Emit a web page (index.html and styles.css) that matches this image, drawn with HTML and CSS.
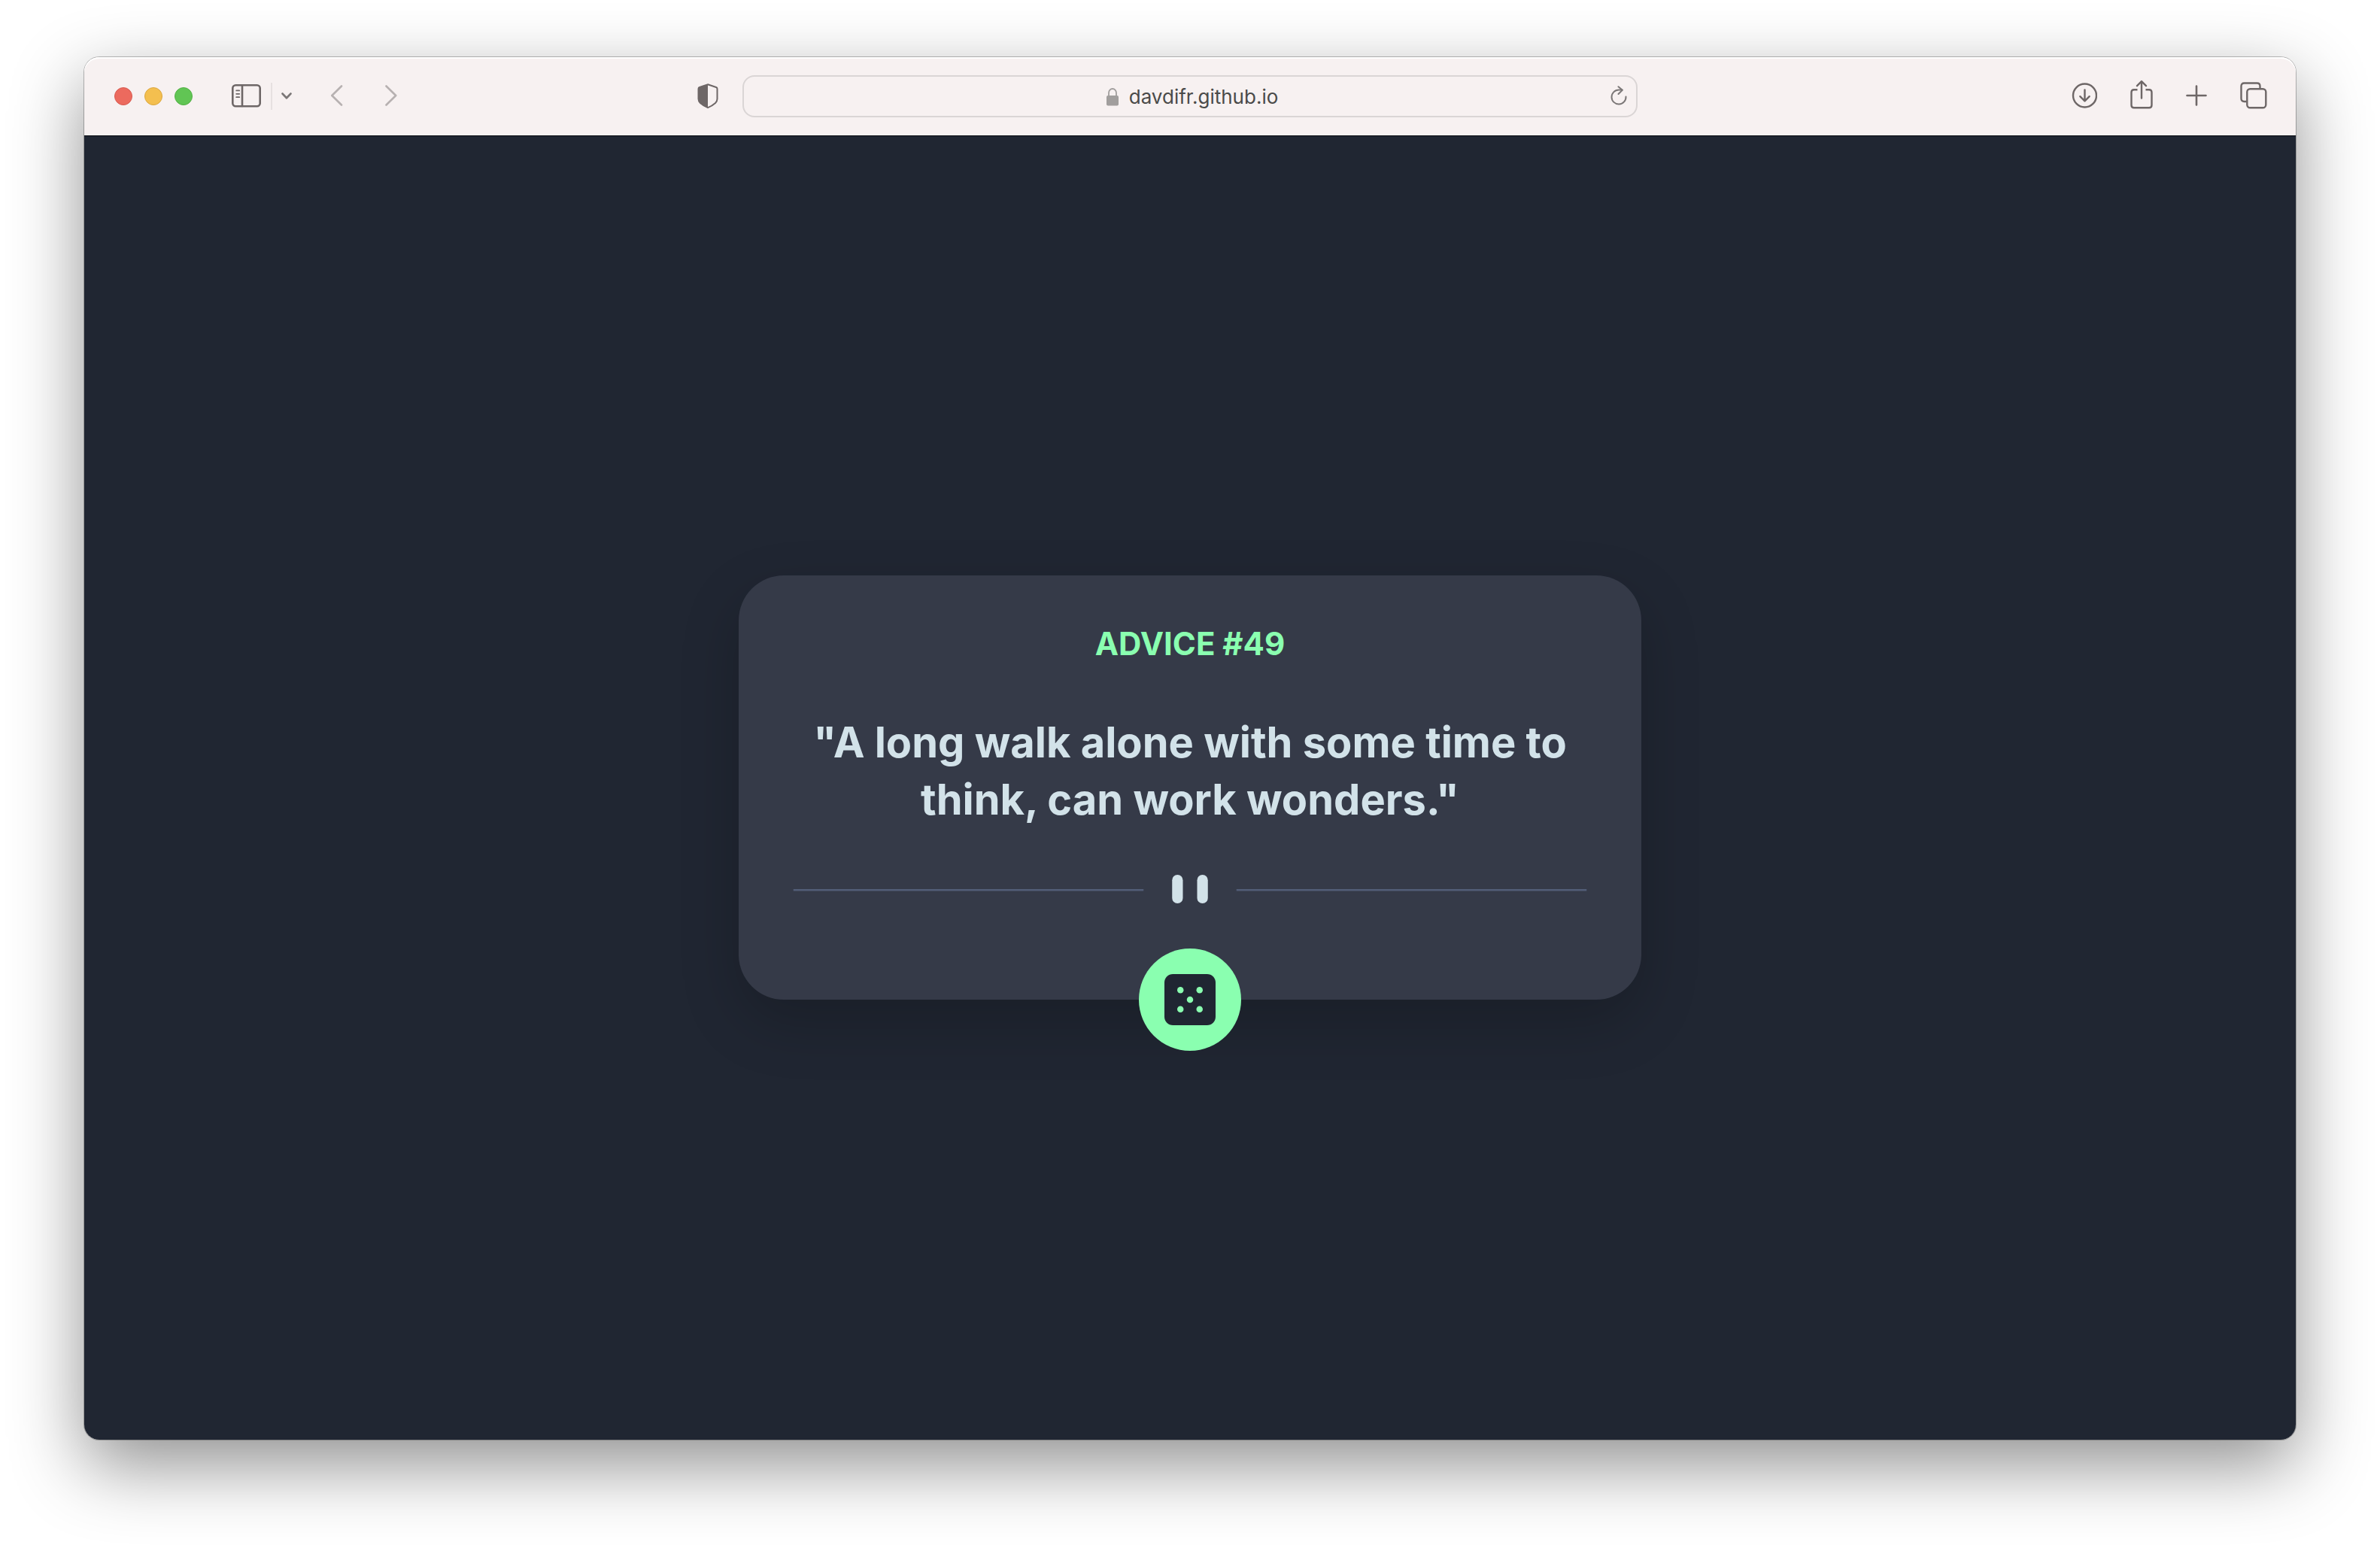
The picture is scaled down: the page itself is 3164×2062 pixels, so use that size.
FILE: index.html
```html
<!DOCTYPE html>
<html lang="en">
<head>
  <meta charset="utf-8">
  <meta name="viewport" content="width=device-width, initial-scale=1">
  <title>Advice Generator</title>
  <link rel="stylesheet" href="styles.css">
</head>
<body>
  <div class="window">
    <header class="toolbar">
      <div class="toolbar-side">
        <div class="lights">
          <button class="light light-close" aria-label="Close"></button>
          <button class="light light-minimize" aria-label="Minimize"></button>
          <button class="light light-zoom" aria-label="Zoom"></button>
        </div>
        <div class="sidebar-tools">
          <button class="tool" aria-label="Show sidebar">
            <svg width="40" height="32" viewBox="0 0 40 32" fill="none" stroke="currentColor" stroke-width="2.6" stroke-linecap="round">
              <rect x="1.3" y="1.3" width="36.4" height="28" rx="4"/>
              <path d="M14 2v27"/>
              <path d="M6.2 8.4h4M6.2 12.8h4M6.2 17.2h4" stroke-width="1.8"/>
            </svg>
          </button>
          <span class="tool-divider"></span>
          <button class="tool tool-soft" aria-label="Tab groups">
            <svg width="14" height="10" viewBox="0 0 14 10" fill="none" stroke="currentColor" stroke-width="2.8" stroke-linecap="round" stroke-linejoin="round"><path d="M1.6 1.6 7 7.2 12.4 1.6"/></svg>
          </button>
        </div>
        <nav class="history">
          <button class="tool tool-off" aria-label="Back">
            <svg width="16" height="30" viewBox="0 0 16 30" fill="none" stroke="currentColor" stroke-width="2.6" stroke-linecap="round" stroke-linejoin="round"><path d="M14 1.500 1.300 14 14 26.500"/></svg>
          </button>
          <button class="tool tool-off" aria-label="Forward">
            <svg width="16" height="30" viewBox="0 0 16 30" fill="none" stroke="currentColor" stroke-width="2.6" stroke-linecap="round" stroke-linejoin="round"><path d="M1.500 1.500 14.200 14 1.500 26.500"/></svg>
          </button>
        </nav>
        <button class="tool shield" aria-label="Privacy report">
          <svg width="28" height="34" viewBox="0 0 28 34">
            <path d="M14 1.2 25 5q1.500.500 1.500 2v13.500q0 3-2.500 5.500Q20 29.600 14 32.200 8 29.600 4 26q-2.500-2.500-2.500-5.500V7Q1.500 5.500 3 5Z" fill="none" stroke="currentColor" stroke-width="2"/>
            <path d="M14 1 3 5Q1.500 5.500 1.500 7v13.500q0 3 2.500 5.500 4 3.600 10 6.200Z" fill="currentColor"/>
          </svg>
        </button>
      </div>

      <form class="address">
        <div class="address-site">
          <svg class="lock" width="16" height="24" viewBox="0 0 16 24">
            <rect y="10" width="16" height="13.500" rx="2" fill="currentColor"/>
            <path d="M3 11V6.500a5 5.500 0 0 1 10 0V11" fill="none" stroke="currentColor" stroke-width="1.800"/>
          </svg>
          <input class="address-input" type="text" aria-label="Address" value="davdifr.github.io" size="14">
        </div>
        <button class="tool tool-soft reload" type="button" aria-label="Reload">
          <svg width="22" height="28" viewBox="0 0 22 28" fill="none" stroke="currentColor" stroke-width="2" stroke-linecap="round" stroke-linejoin="round">
            <path d="M20.500 14.500a9.500 9.500 0 1 1-9.500-9h4.500"/>
            <path d="M10.500 1.200 15.800 5.700 10.500 11"/>
          </svg>
        </button>
      </form>

      <div class="toolbar-side toolbar-end">
        <button class="tool" aria-label="Downloads">
          <svg width="34" height="36" viewBox="0 0 34 36" fill="none" stroke="currentColor" stroke-width="2.400" stroke-linecap="round" stroke-linejoin="round">
            <circle cx="17.500" cy="17" r="15.500"/>
            <path d="M17.500 9.500v14.500M11.300 18.200 17.500 24.300l6.200-6.100"/>
          </svg>
        </button>
        <button class="tool" aria-label="Share">
          <svg width="30" height="44" viewBox="0 0 30 44" fill="none" stroke="currentColor" stroke-width="2.400" stroke-linecap="round" stroke-linejoin="round">
            <path d="M9.500 13.300H5q-3.500 0-3.500 3.500v17Q1.500 37.300 5 37.300h20q3.500 0 3.500-3.500v-17q0-3.500-3.500-3.500h-4.500" stroke-linecap="butt"/>
            <path d="M15 24.500V2.500M9 8.200 15 2.100l6 6.100"/>
          </svg>
        </button>
        <button class="tool" aria-label="New tab">
          <svg width="28" height="30" viewBox="0 0 28 30" fill="none" stroke="currentColor" stroke-width="2.600" stroke-linecap="round"><path d="M14 1.500v25M1.500 14h25"/></svg>
        </button>
        <button class="tool" aria-label="Tab overview">
          <svg width="36" height="38" viewBox="0 0 36 38" fill="none" stroke="currentColor" stroke-width="2.400">
            <rect x="9.300" y="9.300" width="25" height="25" rx="4"/>
            <path d="M8.500 26H5.500q-4 0-4-4V5.500q0-4 4-4h17q4 0 4 4v3"/>
          </svg>
        </button>
      </div>
    </header>

    <main class="page">
      <article class="card">
        <h1 class="card-title">ADVICE #49</h1>
        <p class="card-quote">"A long walk alone with some time to think, can work wonders."</p>
        <svg class="card-divider" viewBox="0 0 444 16" aria-hidden="true">
          <path fill="#525d77" d="M0 8h196v1H0zM248 8h196v1H248z"/>
          <rect x="212" width="6" height="16" rx="3" fill="#d2e2e9"/>
          <rect x="226" width="6" height="16" rx="3" fill="#d2e2e9"/>
        </svg>
        <button class="dice" aria-label="New advice">
          <svg width="68" height="68" viewBox="0 0 24 24">
            <rect width="24" height="24" rx="4" fill="#202632"/>
            <g fill="#8affb0">
              <circle cx="7.500" cy="7.500" r="1.500"/>
              <circle cx="16.500" cy="7.500" r="1.500"/>
              <circle cx="12" cy="12" r="1.500"/>
              <circle cx="7.500" cy="16.500" r="1.500"/>
              <circle cx="16.500" cy="16.500" r="1.500"/>
            </g>
          </svg>
        </button>
      </article>
    </main>
  </div>
</body>
</html>
```
FILE: styles.css
```css
* {
  box-sizing: border-box;
}

body {
  display: flex;
  min-height: 100vh;
  margin: 0;
  padding: 76px 112px 148px;
  background: #fff;
  font-family: Inter, "Liberation Sans", sans-serif;
}

button {
  padding: 0;
  border: 0;
  background: none;
  color: inherit;
}

svg {
  display: block;
}

.window {
  display: flex;
  flex: 1;
  flex-direction: column;
  border-radius: 20px;
  box-shadow: 0 0 0 1px rgba(0, 0, 0, 0.25), 0 34px 96px rgba(0, 0, 0, 0.44);
}

/* Browser toolbar */

.toolbar {
  display: grid;
  grid-template-columns: 1fr minmax(300px, 1190px) 1fr;
  align-items: center;
  height: 104px;
  border-radius: 20px 20px 0 0;
  background: #f7f1f1;
  box-shadow: inset 0 2px 0 #fff;
  color: #6e6767;
}

.toolbar-side {
  display: flex;
  align-items: center;
  padding: 0 32px 0 40px;
}

.toolbar-end {
  justify-content: flex-end;
  gap: 44px;
  padding: 0 38px 0 0;
}

.lights {
  display: flex;
  gap: 16px;
  margin-right: 52px;
}

.light {
  width: 24px;
  height: 24px;
  border: 1px solid;
  border-radius: 50%;
}

.light-close {
  border-color: #d85a50;
  background: #ec6a5e;
}

.light-minimize {
  border-color: #dba73f;
  background: #f4bf4f;
}

.light-zoom {
  border-color: #52b045;
  background: #61c554;
}

.tool-soft {
  color: #7b7777;
}

.tool-off {
  color: #b7b1b1;
}

.sidebar-tools {
  display: flex;
  align-items: center;
  gap: 12px;
  margin-right: 52px;
}

.tool-divider {
  width: 2px;
  height: 36px;
  background: #e6e0e0;
}

.history {
  display: flex;
  gap: 56px;
}

.shield {
  margin-left: auto;
}

.address {
  display: grid;
  grid-template-columns: 1fr auto 1fr;
  align-items: center;
  height: 56px;
  padding: 0 12px;
  border: 2px solid #dad5d5;
  border-radius: 16px;
}

.address-site {
  display: flex;
  grid-column: 2;
  align-items: center;
  gap: 14px;
  padding: 2px 0 0 6px;
}

.lock {
  color: #a19e9d;
}

.address-input {
  field-sizing: content;
  padding: 0;
  border: 0;
  outline: 0;
  background: none;
  color: #4a4a49;
  font: 400 26px/32px Inter, "Liberation Sans", sans-serif;
}

.reload {
  justify-self: end;
}

/* Advice page */

.page {
  display: flex;
  flex: 1;
  align-items: center;
  justify-content: center;
  border-radius: 0 0 20px 20px;
  background: #202632;
  box-shadow: inset 0 1px 0 #05070c;
}

.card {
  position: relative;
  width: 100%;
  max-width: 1200px;
  padding: 64px 72px 128px;
  border-radius: 60px;
  background: #353a48;
  box-shadow: 0 30px 80px rgba(0, 0, 0, 0.2);
  text-align: center;
}

.card-title {
  margin: 0 0 66px;
  color: #8affb0;
  font-size: 42px;
  font-weight: 700;
  line-height: 54px;
}

.card-quote {
  margin: 0 0 62px;
  color: #d2e2e9;
  font-size: 56px;
  font-weight: 700;
  line-height: 76px;
}

.card-divider {
  width: 100%;
  height: 38px;
}

.dice {
  position: absolute;
  bottom: -68px;
  left: calc(50% - 68px);
  display: grid;
  place-items: center;
  width: 136px;
  height: 136px;
  border-radius: 50%;
  background: #8affb0;
}
```
